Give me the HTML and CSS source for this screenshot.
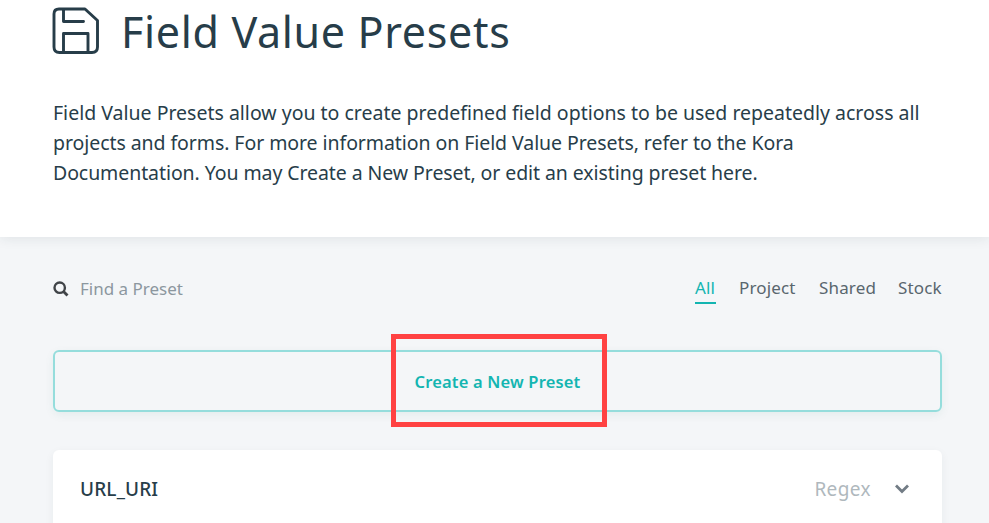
FILE: index.html
```html
<!DOCTYPE html>
<html lang="en">
<head>
<meta charset="utf-8">
<title>Field Value Presets</title>
<link rel="stylesheet" href="styles.css">
</head>
<body>
<header class="head">
  <h1 class="title">
    <svg class="title-icon" width="48" height="48" viewBox="0 0 48 48" fill="none" stroke="currentColor" stroke-width="2.900" stroke-linejoin="round" stroke-linecap="round"><path d="M7 2H33L45.500 13.500V40Q45.500 45.500 40 45.500H7.500Q2 45.500 2 40V7Q2 2 7 2M11.500 2V14.500H31.500M11.500 45V26.500H36V45"/></svg>
    <span class="title-text">Field Value Presets</span>
  </h1>
  <p class="intro"><span class="l1">Field Value Presets allow you to create predefined field options to be used repeatedly across all</span><br><span class="l2">projects and forms. For more information on Field Value Presets, refer to the Kora</span><br><span class="l3">Documentation. You may Create a New Preset, or edit an existing preset here.</span></p>
</header>
<main class="content">
  <div class="toolbar">
    <div class="search">
      <svg width="16" height="16" viewBox="0 0 16 16" fill="none" stroke="#404448" stroke-width="2.400"><circle cx="6.700" cy="6.700" r="5.200"/><path d="M10.500 10.500L14.500 14.500" stroke-width="2.800"/></svg>
      <span class="placeholder">Find a Preset</span>
    </div>
    <nav class="tabs"><a class="tab active">All</a><a class="tab project">Project</a><a class="tab shared">Shared</a><a class="tab stock">Stock</a></nav>
  </div>
  <div class="create"><span class="create-text">Create a New Preset</span><div class="highlight"></div></div>
  <section class="card">
    <span class="name">URL_URI</span>
    <span class="type">Regex</span>
    <svg width="16" height="10" viewBox="0 0 16 10" fill="none" stroke="#727c85" stroke-width="2.800"><path d="M2 1.500L8 7.500L14 1.500"/></svg>
  </section>
</main>
</body>
</html>
```
FILE: styles.css
```css
* { box-sizing: border-box; }
body { margin: 0; height: 523px; overflow: hidden; background: #f4f6f8; color: #273d49; font-family: "Noto Sans", sans-serif; }
.head { height: 237px; padding: 7px 47px 0 52px; background: #fff; box-shadow: 0 1px 12px rgba(30, 50, 60, .1); }
.title { display: flex; align-items: flex-start; margin: 0; height: 91px; font-size: 43px; font-weight: 400; line-height: 50px; }
.title-icon { margin-right: 21px; flex: none; }
.title-text { letter-spacing: .67px; white-space: nowrap; }
.intro { margin: 0 0 0 1px; font-size: 19.5px; line-height: 30px; white-space: nowrap; }
.l1 { letter-spacing: 0; }
.l2 { letter-spacing: -.07px; }
.l3 { letter-spacing: -.08px; }
.content { padding: 0 47px 0 53px; }
.toolbar { display: flex; justify-content: space-between; padding-top: 38px; height: 113px; font-size: 17px; line-height: 26px; }
.search { display: flex; align-items: center; height: 27px; gap: 11px; color: #8c979f; }
.tabs { display: flex; gap: 23px; color: #59666e; }
.tab { height: 29px; white-space: nowrap; letter-spacing: .15px; }
.active { color: #13b5b1; border-bottom: 2px solid #13b5b1; }
.tab.active { width: 21px; }
.project { width: 57px; }
.shared { width: 56px; }
.stock { width: 44px; }
.create { position: relative; display: flex; align-items: center; justify-content: center; height: 62px; border: 2px solid #95dddc; border-radius: 6px; color: #13b5b1; font-size: 16.5px; font-weight: 600; box-shadow: 0 3px 10px rgba(19, 120, 100, .07); }
.create-text { letter-spacing: .17px; padding-top: 1px; }
.highlight { position: absolute; left: 336px; top: -18px; width: 216px; height: 93px; border: 5px solid #ff4242; }
.card { display: flex; align-items: center; margin-top: 38px; height: 78px; padding: 0 32px 0 27px; border-radius: 6px; background: #fff; box-shadow: 0 3px 10px rgba(30, 50, 60, .06); font-size: 19px; }
.name { font-weight: 500; margin-right: auto; letter-spacing: .15px; }
.type { margin-right: 23px; letter-spacing: .4px; color: #afb8bd; }
```
